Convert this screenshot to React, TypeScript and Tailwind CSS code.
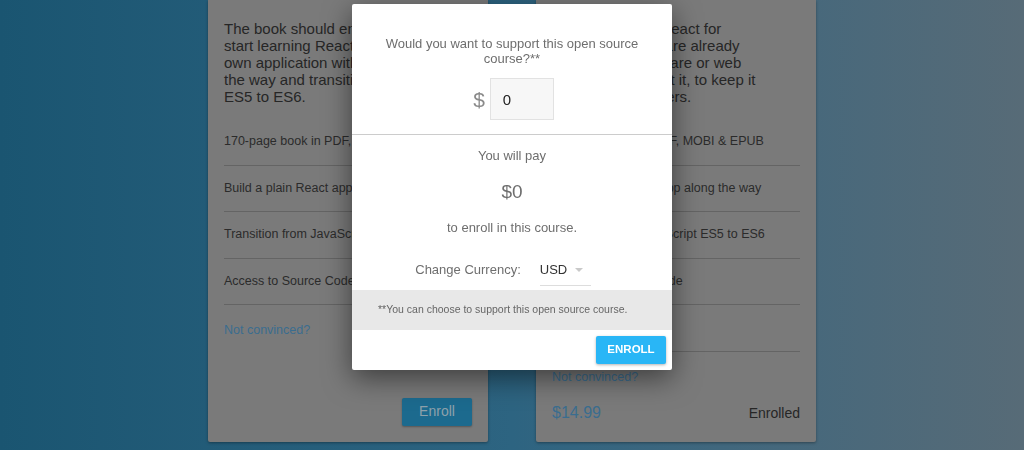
import React from 'react';

type Course = {
    intro: string[];
    items: string[];
    enrolled: boolean;
};

const COURSES: Course[] = [
    {
        intro: [
            'The book should enable you to',
            'start learning React and build your',
            'own application with it. Learn',
            'the way and transition from',
            'ES5 to ES6.',
        ],
        items: [
            '170-page book in PDF, MOBI & EPUB',
            'Build a plain React app along the way',
            'Transition from JavaScript ES5 to ES6',
            'Access to Source Code',
        ],
        enrolled: false,
    },
    {
        intro: [
            'A guide to learn React for',
            'newcomers who are already',
            'familiar with software or web',
            'who all read about it, to keep it',
            'simple for beginners.',
        ],
        items: [
            '170-page book in PDF, MOBI & EPUB',
            'Build a plain React app along the way',
            'Transition from JavaScript ES5 to ES6',
            'Access to Source Code',
            'Lifetime Updates',
        ],
        enrolled: true,
    },
];

function CourseCard({ course }: { course: Course }) {
    return (
        <div className="flex w-[280px] flex-col rounded-b-[2px] bg-[#7a7a7a] px-4 pt-[20px] pb-4 shadow-[0_1px_3px_rgba(0,0,0,0.35)]">
            {/* Description */}
            <p className="mb-[14px] whitespace-nowrap text-[15px] leading-[17px] text-[#262626]">
                {course.intro.map((line, i) => (
                    <span key={i} className="block">{line}</span>
                ))}
            </p>

            {/* Feature list */}
            <ul>
                {course.items.map((item, i) => (
                    <li
                        key={i}
                        className="whitespace-nowrap border-b border-[#646464] py-[15px] text-[12.5px] leading-[15.5px] text-[#2b2b2b]"
                    >
                        {item}
                    </li>
                ))}
            </ul>

            <a className="mt-[18px] self-start text-[12.5px] leading-[15px] text-[#3a6d8f]">Not convinced?</a>

            {/* Footer */}
            {course.enrolled ? (
                <div className="mt-auto flex justify-between pt-[13px]">
                    <div className="flex h-[28px] w-full items-center justify-between pt-[3px]">
                        <span className="text-[16px] text-[#3a6d8f]">$14.99</span>
                        <span className="text-[14px] text-[#262626]">Enrolled</span>
                    </div>
                </div>
            ) : (
                <div className="mt-auto flex justify-end pt-[12px]">
                    <button className="h-[28px] w-[70px] rounded-[2px] bg-[#1c6a8e] text-[14px] text-[#8ea1ab] shadow-[0_1px_2px_rgba(0,0,0,0.3)]">
                        Enroll
                    </button>
                </div>
            )}
        </div>
    );
}

function SupportModal() {
    return (
        <div className="fixed inset-0 flex justify-center pt-[4px]">
            <div className="h-fit w-[320px] rounded-[2px] bg-white shadow-[0_8px_28px_rgba(0,0,0,0.5)]">
                {/* Amount */}
                <div className="px-6 pt-[32px] pb-[14px] text-center">
                    <p className="text-[13px] leading-[15px] text-[#6e6e6e]">
                        Would you want to support this open source course?**
                    </p>
                    <div className="mt-[12px] flex items-center justify-center gap-[5px] pl-[3px]">
                        <span className="text-[21px] leading-none text-[#8a8a8a]">$</span>
                        <input
                            readOnly
                            value="0"
                            className="h-[42px] w-[64px] border border-[#e2e2e2] bg-[#f7f7f7] px-3 text-[15px] text-[#222] outline-none"
                        />
                    </div>
                </div>

                {/* Summary */}
                <div className="border-t border-[#cccccc] pt-[13px] text-center text-[#6e6e6e]">
                    <p className="text-[13px] leading-[15px]">You will pay</p>
                    <p className="mt-[17.5px] text-[19px] leading-[22px]">$0</p>
                    <p className="mt-[17.5px] text-[13px] leading-[15px]">to enroll in this course.</p>

                    <div className="mt-[27px] flex justify-center pr-[18px]">
                        <span className="pr-[19px] text-[13px] leading-[15px]">Change Currency:</span>
                        <div className="flex w-[51px] items-start border-b border-[#dddddd] pb-[8px]">
                            <span className="text-[13px] leading-[15px] text-[#333]">USD</span>
                            <svg width="8" height="4" viewBox="0 0 8 4" className="ml-[8px] mt-[6px]">
                                <polygon points="0,0 8,0 4,4" fill="#c9c9c9" />
                            </svg>
                        </div>
                    </div>
                </div>

                {/* Note */}
                <div className="mt-[4px] flex h-[40px] items-center bg-[#e8e8e8] pl-[26px] text-[10.5px] text-[#666]">
                    **You can choose to support this open source course.
                </div>

                {/* Actions */}
                <div className="flex justify-end p-[6px]">
                    <button className="h-[28px] w-[70px] rounded-[2px] bg-[#29b6f6] text-[11.5px] font-bold text-white shadow-[0_1px_3px_rgba(0,0,0,0.3)]">
                        ENROLL
                    </button>
                </div>
            </div>
        </div>
    );
}

export default function App() {
    return (
        <div className="relative h-[450px] w-[1024px] overflow-hidden bg-linear-to-r from-[#1a5571] via-[#2d6481] to-[#576b77] font-['Liberation_Sans',Arial,sans-serif]">
            <div className="flex items-stretch justify-center gap-12">
                {COURSES.map((c, i) => (
                    <CourseCard key={i} course={c} />
                ))}
            </div>
            <SupportModal />
        </div>
    );
}
